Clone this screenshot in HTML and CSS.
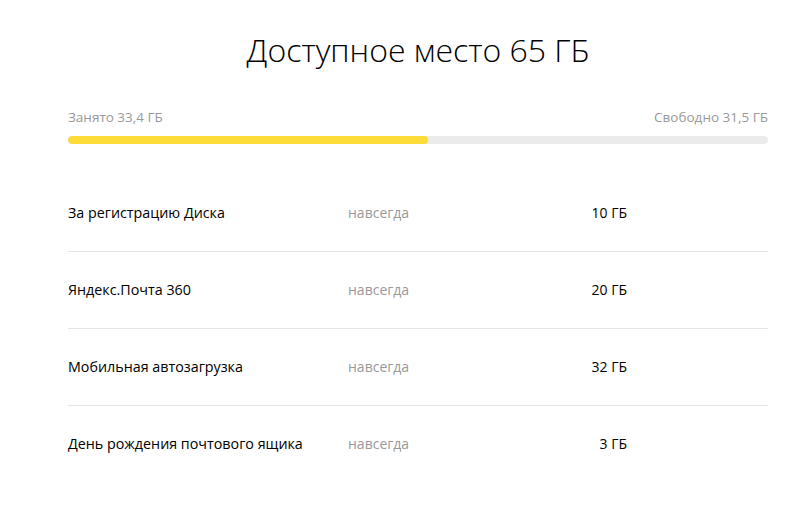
FILE: index.html
```html
<!DOCTYPE html>
<html lang="ru">
<head>
    <meta charset="UTF-8">
    <title>Доступное место</title>
    <link rel="stylesheet" href="styles.css">
</head>
<body>
    <div class="space">
        <h1 class="space-title">Доступное место 65 ГБ</h1>
        <div class="space-legend">
            <span>Занято 33,4 ГБ</span>
            <span>Свободно 31,5 ГБ</span>
        </div>
        <div class="space-bar">
            <div class="space-bar-used" style="width: 51.4%;"></div>
        </div>
        <ul class="space-list">
            <li class="space-item">
                <span class="space-name">За регистрацию Диска</span>
                <span class="space-term">навсегда</span>
                <span class="space-size">10 ГБ</span>
            </li>
            <li class="space-item">
                <span class="space-name">Яндекс.Почта 360</span>
                <span class="space-term">навсегда</span>
                <span class="space-size">20 ГБ</span>
            </li>
            <li class="space-item">
                <span class="space-name">Мобильная автозагрузка</span>
                <span class="space-term">навсегда</span>
                <span class="space-size">32 ГБ</span>
            </li>
            <li class="space-item">
                <span class="space-name">День рождения почтового ящика</span>
                <span class="space-term">навсегда</span>
                <span class="space-size">3 ГБ</span>
            </li>
        </ul>
    </div>
</body>
</html>
```

FILE: styles.css
```css
body {
    margin: 0;
    font-family: "Open Sans", Arial, sans-serif;
    background-color: #fff;
    color: #000;
}
.space {
    width: 700px;
    padding: 26px 0 0 68px;
}
.space-title {
    margin: 0;
    text-align: center;
    font-size: 32px;
    font-weight: 300;
    line-height: 48px;
}
.space-legend {
    display: flex;
    justify-content: space-between;
    margin-top: 34px;
    font-size: 13.5px;
    line-height: 18px;
    color: #999;
}
.space-bar {
    margin-top: 10px;
    height: 8px;
    border-radius: 4px;
    background-color: #ebebeb;
    overflow: hidden;
}
.space-bar-used {
    height: 100%;
    border-radius: 4px;
    background-color: #fddc3a;
}
.space-list {
    list-style: none;
    margin: 31px 0 0;
    padding: 0;
}
.space-item {
    display: flex;
    align-items: center;
    box-sizing: border-box;
    height: 77px;
    padding-bottom: 2px;
    font-size: 14.3px;
    border-bottom: 1px solid #e5e5e5;
}
.space-item:last-child {
    border-bottom: none;
}
.space-name {
    width: 280px;
}
.space-term {
    width: 200px;
    font-size: 14px;
    color: #999;
}
.space-size {
    width: 79px;
    font-size: 14px;
    text-align: right;
}
```
